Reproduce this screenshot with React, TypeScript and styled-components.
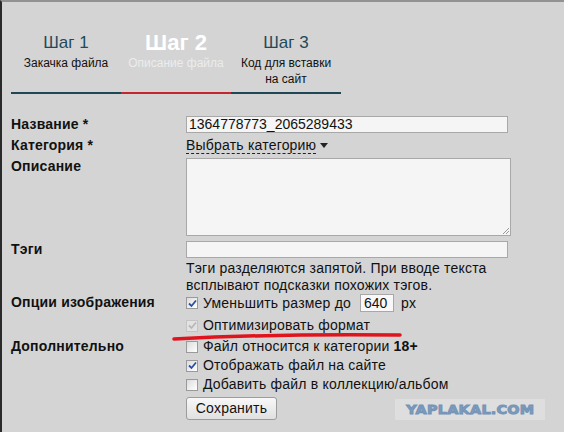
import React from "react";
import styled, { createGlobalStyle } from "styled-components";

const GlobalStyle = createGlobalStyle`
	html, body {
		margin: 0;
		padding: 0;
		background: #ffffff;
	}
	body {
		font-family: "Liberation Sans", Arial, sans-serif;
		font-size: 14px;
		letter-spacing: 0.2px;
		color: #111;
	}
`;

const Frame = styled.div`
	position: relative;
	box-sizing: border-box;
	width: 564px;
	height: 432px;
	background: #d4d4d4;
	border-top: 2px solid #929292;
	border-left: 2px solid #2a2a2a;
	padding-left: 9px;
	padding-top: 30px;
`;

const Steps = styled.div`
	display: flex;
	width: 330px;
	margin-bottom: 22px;
	letter-spacing: 0;
`;

const Step = styled.div<{ $active?: boolean }>`
	width: 110px;
	height: 62px;
	box-sizing: border-box;
	display: flex;
	flex-direction: column;
	align-items: center;
	text-align: center;
	border-bottom: 2px solid ${(p) => (p.$active ? "#c3262c" : "#1f4756")};
`;

const StepTitle = styled.div<{ $active?: boolean }>`
	font-size: ${(p) => (p.$active ? "22px" : "17px")};
	font-weight: ${(p) => (p.$active ? "bold" : "normal")};
	color: ${(p) => (p.$active ? "#ffffff" : "#1e4a5a")};
	line-height: 22px;
	height: 22px;
`;

const StepText = styled.div<{ $active?: boolean }>`
	font-size: 12px;
	line-height: 16px;
	margin-top: 1px;
	color: ${(p) => (p.$active ? "#ececec" : "#111")};
`;

const Form = styled.div`
	display: grid;
	grid-template-columns: 175px 325px;
	row-gap: 4px;
	align-items: start;
`;

const Label = styled.div`
	font-weight: bold;
	font-size: 14px;
	line-height: 17px;
	color: #111;
`;

const Field = styled.div`
	display: flex;
	flex-direction: column;
	gap: 2px;
	margin-bottom: -4px;
`;

const TextInput = styled.div`
	box-sizing: border-box;
	width: 322px;
	height: 17px;
	background: #f5f5f5;
	border: 1px solid #a8a8a8;
	padding: 0 2px;
	font-size: 14px;
	letter-spacing: 0;
	line-height: 15px;
	color: #111;
`;

const TextArea = styled.div`
	position: relative;
	box-sizing: border-box;
	width: 325px;
	height: 78px;
	background: #f5f5f5;
	border: 1px solid #a8a8a8;
	margin-bottom: 1px;
`;

const Grip = styled.svg`
	position: absolute;
	right: 0;
	bottom: 0;
`;

const Select = styled.div`
	display: flex;
	align-items: center;
	gap: 4px;
	line-height: 17px;
	height: 17px;
`;

const Dashed = styled.span`
	border-bottom: 1px dashed #222;
	line-height: 15px;
`;

const Hint = styled.div`
	line-height: 17px;
	color: #111;
	width: 325px;
`;

const Options = styled.div<{ $gap: number }>`
	display: flex;
	flex-direction: column;
	gap: ${(p) => p.$gap}px;
`;

const CheckRow = styled.div<{ $tall?: boolean }>`
	display: flex;
	align-items: center;
	gap: 5px;
	height: ${(p) => (p.$tall ? "18px" : "17px")};
	line-height: 17px;
	color: #111;
	white-space: nowrap;
`;

const Box = styled.span<{ $disabled?: boolean }>`
	box-sizing: border-box;
	width: 12px;
	height: 12px;
	flex: none;
	display: inline-flex;
	align-items: center;
	justify-content: center;
	border: 1px solid ${(p) => (p.$disabled ? "#c4c4c4" : "#9a9a9a")};
	background: ${(p) =>
		p.$disabled ? "#e2e2e2" : "linear-gradient(135deg, #dcdcdc, #ffffff)"};
`;

const SizeInput = styled.span`
	box-sizing: border-box;
	display: inline-block;
	width: 34px;
	height: 18px;
	margin-left: 9px;
	background: #f8f8f8;
	border: 1px solid #a8a8a8;
	padding-left: 3px;
	line-height: 16px;
	letter-spacing: 0;
`;

const Px = styled.span`
	margin-left: 3px;
`;

const Button = styled.div`
	box-sizing: border-box;
	margin-top: 2px;
	width: 91px;
	height: 23px;
	border: 1px solid #9c9c9c;
	border-radius: 3px;
	background: linear-gradient(#f8f8f8, #e0e0e0);
	font-size: 14px;
	line-height: 21px;
	text-align: center;
	color: #111;
`;

const Marker = styled.svg`
	position: absolute;
	left: 170px;
	top: 329px;
`;

const Watermark = styled.div`
	position: absolute;
	left: 393px;
	top: 397px;
	width: 150px;
	height: 21px;
	display: flex;
	align-items: center;
	justify-content: center;
	background: #dedede;
`;

const WatermarkText = styled.span`
	display: inline-block;
	font-family: "DejaVu Sans", sans-serif;
	font-weight: bold;
	font-size: 12px;
	line-height: 12px;
	letter-spacing: 0.2px;
	color: #7d9cbc;
	-webkit-text-stroke: 0.9px #7393b5;
	transform: scaleX(1.2);
`;

function Check({ checked, disabled }: { checked?: boolean; disabled?: boolean }) {
	return (
		<Box $disabled={disabled}>
			{checked && (
				<svg width="9" height="9" viewBox="0 0 9 9">
					<path
						d="M1 4.5 L3.5 7 L8 1.5"
						fill="none"
						stroke={disabled ? "#b8b8b8" : "#2b4fa6"}
						strokeWidth="1.8"
					/>
				</svg>
			)}
		</Box>
	);
}

export default function App() {
	return (
		<>
			<GlobalStyle />
			<Frame>
				<Steps>
					<Step>
						<StepTitle>Шаг 1</StepTitle>
						<StepText>Закачка файла</StepText>
					</Step>
					<Step $active>
						<StepTitle $active>Шаг 2</StepTitle>
						<StepText $active>Описание файла</StepText>
					</Step>
					<Step>
						<StepTitle>Шаг 3</StepTitle>
						<StepText>
							Код для вставки
							<br />
							на сайт
						</StepText>
					</Step>
				</Steps>

				<Form>
					<Label>Название *</Label>
					<TextInput>1364778773_2065289433</TextInput>

					<Label>Категория *</Label>
					<Select>
						<Dashed>Выбрать категорию</Dashed>
						<svg width="8" height="5" viewBox="0 0 8 5">
							<path d="M0 0 H8 L4 5 Z" fill="#222" />
						</svg>
					</Select>

					<Label>Описание</Label>
					<TextArea>
						<Grip width="10" height="10" viewBox="0 0 10 10">
							<path d="M9 3 L3 9 M9 6 L6 9" stroke="#999" strokeWidth="1" />
						</Grip>
					</TextArea>

					<Label>Тэги</Label>
					<Field>
						<TextInput />
						<Hint>
							Тэги разделяются запятой. При вводе текста всплывают подсказки похожих тэгов.
						</Hint>
					</Field>

					<Label>Опции изображения</Label>
					<Options $gap={5}>
						<CheckRow $tall>
							<Check checked />
							<span>
								Уменьшить размер до
								<SizeInput>640</SizeInput>
								<Px> px</Px>
							</span>
						</CheckRow>
						<CheckRow>
							<Check checked disabled />
							<span>Оптимизировать формат</span>
						</CheckRow>
					</Options>

					<Label>Дополнительно</Label>
					<Options $gap={2}>
						<CheckRow>
							<Check />
							<span>
								Файл относится к категории <b>18+</b>
							</span>
						</CheckRow>
						<CheckRow>
							<Check checked />
							<span>Отображать файл на сайте</span>
						</CheckRow>
						<CheckRow>
							<Check />
							<span>Добавить файл в коллекцию/альбом</span>
						</CheckRow>
						<Button>Сохранить</Button>
					</Options>
				</Form>

				<Marker width="232" height="12" viewBox="0 0 232 12">
					<path
						d="M2 8 C60 5, 150 3, 228 4"
						fill="none"
						stroke="#e0141c"
						strokeWidth="3.5"
						strokeLinecap="round"
					/>
				</Marker>

				<Watermark>
					<WatermarkText>YAPLAKAL.COM</WatermarkText>
				</Watermark>
			</Frame>
		</>
	);
}
